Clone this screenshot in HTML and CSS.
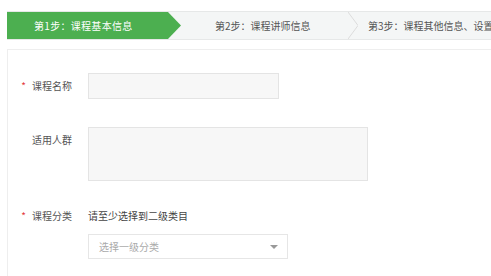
FILE: index.html
```html
<!DOCTYPE html>
<html lang="zh-CN">
<head>
<meta charset="utf-8">
<title>课程信息</title>
<link rel="stylesheet" href="styles.css">
</head>
<body>
<div class="steps">
  <div class="step step-active">第1步：课程基本信息</div>
  <div class="step step-2">第2步：课程讲师信息</div>
  <svg class="chev" width="10" height="27" viewBox="0 0 10 27"><polyline points="0,0 10,13.5 0,27" fill="none" stroke="#dcdcdc" stroke-width="1"/></svg>
  <div class="step step-3">第3步：课程其他信息、设置</div>
</div>
<div class="panel">
  <div class="row row-name">
    <label class="lbl"><span class="req">*</span>课程名称</label>
    <div class="field"><div class="input"></div></div>
  </div>
  <div class="row row-aud">
    <label class="lbl">适用人群</label>
    <div class="field"><div class="textarea"></div></div>
  </div>
  <div class="row row-cat">
    <label class="lbl"><span class="req">*</span>课程分类</label>
    <div class="field">
      <div class="hint">请至少选择到二级类目</div>
      <div class="select"><span class="ph">选择一级分类</span><span class="caret"></span></div>
    </div>
  </div>
</div>
</body>
</html>
```
FILE: styles.css
```css
html, body {
  margin: 0;
  padding: 0;
  background: #fff;
  overflow: hidden;
}
body {
  font-family: "Noto Sans CJK SC", "Noto Sans", sans-serif;
  font-size: 10px;
  color: #555;
  width: 491px;
  height: 276px;
}
.steps {
  display: flex;
  align-items: center;
  margin: 11px 0 0 7px;
  width: 484px;
  height: 29px;
  box-sizing: border-box;
  background: #f4f6f6;
  border-top: 1px solid #e6e8e8;
  border-bottom: 1px solid #e6e8e8;
  white-space: nowrap;
  overflow: hidden;
}
.step {
  height: 27px;
  line-height: 27px;
  flex: none;
  box-sizing: border-box;
}
.step-active {
  width: 174px;
  height: 29px;
  line-height: 29px;
  margin: -1px 0;
  padding-left: 27px;
  background: #4caf50;
  color: #fff;
  letter-spacing: 0.3px;
  clip-path: polygon(0 0, 160px 0, 100% 50%, 160px 100%, 0 100%);
}
.step-2 {
  width: 167px;
  padding-left: 34px;
}
.chev {
  flex: none;
  display: block;
}
.step-3 {
  flex: 1 1 auto;
  min-width: 0;
  overflow: hidden;
  padding-left: 10px;
}
.panel {
  margin: 9px 0 0 7px;
  width: 484px;
  height: 227px;
  box-sizing: border-box;
  border-top: 1px solid #eeeeee;
  border-left: 1px solid #eeeeee;
  padding-top: 23px;
}
.row {
  display: grid;
  grid-template-columns: 64px 1fr;
  column-gap: 16px;
}
.row-name {
  align-items: center;
}
.row-aud {
  margin-top: 28px;
}
.row-cat {
  margin-top: 28px;
}
.lbl {
  text-align: right;
  color: #555;
  line-height: 14px;
}
.row-aud .lbl {
  padding-top: 6px;
}
.req {
  color: #e4393c;
  margin-right: 6px;
}
.input {
  width: 191px;
  height: 26px;
  box-sizing: border-box;
  border: 1px solid #e4e4e4;
  background: #f7f7f7;
}
.textarea {
  width: 280px;
  height: 54px;
  box-sizing: border-box;
  border: 1px solid #e4e4e4;
  background: #f7f7f7;
}
.hint {
  color: #444;
  line-height: 14px;
}
.select {
  margin-top: 11px;
  width: 200px;
  height: 25px;
  box-sizing: border-box;
  border: 1px solid #e6e6e6;
  background: #fff;
  display: flex;
  align-items: center;
  justify-content: space-between;
  padding: 0 9px 0 10px;
}
.ph {
  color: #aaa;
}
.caret {
  width: 0;
  height: 0;
  border-left: 4px solid transparent;
  border-right: 4px solid transparent;
  border-top: 4px solid #999;
}
```
